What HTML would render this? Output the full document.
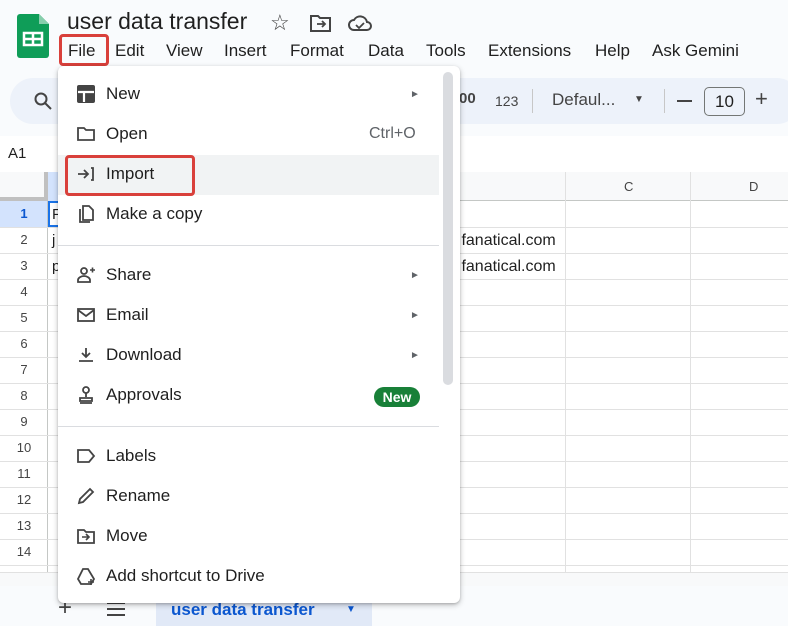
<!DOCTYPE html>
<html><head><style>
*{margin:0;padding:0;box-sizing:border-box}
body{width:788px;height:626px;overflow:hidden;background:#f9fbfd;font-family:"Liberation Sans",Arial,sans-serif;color:#1f1f1f;position:relative}
.a{position:absolute}
.mb{position:absolute;top:41px;font-size:17px;color:#1f1f1f}
.mi{position:absolute;left:106px;font-size:17px;color:#1f1f1f}
.ic{position:absolute;left:76px;width:20px;height:20px}
.rh{position:absolute;left:0;width:48px;text-align:center;font-size:13px;color:#444}
.hl{position:absolute;height:1px;background:#e1e1e1}
.arr{position:absolute;left:410px;font-size:10px;color:#5f6368}
</style></head><body>
<svg class="a" style="left:17px;top:14px" width="32" height="44" viewBox="0 0 32 44"><path d="M3 0h19l10 10v31a3 3 0 0 1-3 3H3a3 3 0 0 1-3-3V3a3 3 0 0 1 3-3z" fill="#0f9d58"/><path d="M22 0v10h10z" fill="#87ceac"/><rect x="7" y="19" width="18" height="12" fill="none" stroke="#fff" stroke-width="2.5"/><path d="M7 25h18M16 19v12" stroke="#fff" stroke-width="2.5"/></svg>
<div class="a" style="left:67px;top:8px;font-size:23px;color:#1f1f1f">user data transfer</div>
<div class="a" style="left:270px;top:10px;font-size:22px;color:#444">☆</div>
<svg class="a" style="left:310px;top:14px" width="22" height="18" viewBox="0 0 22 18"><path d="M1 2h7l2 2h10v13H1z" fill="none" stroke="#444" stroke-width="2"/><path d="M7 10h8M12 7l3 3-3 3" fill="none" stroke="#444" stroke-width="1.8"/></svg>
<svg class="a" style="left:348px;top:14px" width="24" height="18" viewBox="0 0 24 18"><path d="M6 16a5 5 0 0 1 0-10 7 7 0 0 1 13 2 4 4 0 0 1 0 8z" fill="none" stroke="#444" stroke-width="2"/><path d="M8 11l3 3 5-5" fill="none" stroke="#444" stroke-width="1.8"/></svg>
<div class="mb" style="left:68px">File</div>
<div class="mb" style="left:115px">Edit</div>
<div class="mb" style="left:166px">View</div>
<div class="mb" style="left:224px">Insert</div>
<div class="mb" style="left:290px">Format</div>
<div class="mb" style="left:368px">Data</div>
<div class="mb" style="left:426px">Tools</div>
<div class="mb" style="left:488px">Extensions</div>
<div class="mb" style="left:595px">Help</div>
<div class="mb" style="left:652px">Ask Gemini</div>
<div class="a" style="left:59px;top:34px;width:50px;height:32px;border:3px solid #d9403b;border-radius:4px"></div>
<div class="a" style="left:10px;top:78px;width:790px;height:46px;background:#edf2fa;border-radius:23px"></div>
<svg class="a" style="left:34px;top:92px" width="18" height="18" viewBox="0 0 18 18"><circle cx="7" cy="7" r="5.5" fill="none" stroke="#444" stroke-width="2"/><path d="M11 11l6 6" stroke="#444" stroke-width="2"/></svg>
<div class="a" style="left:459px;top:90px;font-size:15px;color:#444;font-weight:bold">00</div>
<div class="a" style="left:495px;top:93px;font-size:14px;color:#444">123</div>
<div class="a" style="left:532px;top:89px;width:1px;height:24px;background:#c7c7c7"></div>
<div class="a" style="left:552px;top:90px;font-size:17px;color:#444">Defaul...</div>
<div class="a" style="left:634px;top:94px;font-size:10px;color:#444">▼</div>
<div class="a" style="left:664px;top:89px;width:1px;height:24px;background:#c7c7c7"></div>
<div class="a" style="left:677px;top:100px;width:15px;height:2px;background:#444"></div>
<div class="a" style="left:704px;top:87px;width:41px;height:29px;border:1px solid #747775;border-radius:5px;font-size:17px;text-align:center;line-height:27px;color:#1f1f1f">10</div>
<div class="a" style="left:755px;top:86px;font-size:22px;color:#444">+</div>
<div class="a" style="left:0;top:136px;width:788px;height:36px;background:#fff"></div>
<div class="a" style="left:8px;top:145px;font-size:15px">A1</div>
<div class="a" style="left:0;top:172px;width:788px;height:414px;background:#fff"></div>
<div class="a" style="left:0;top:172px;width:48px;height:29px;background:#f8f9fa;border-right:4px solid #c0c0c0;border-bottom:4px solid #c0c0c0"></div>
<div class="a" style="left:48px;top:172px;width:740px;height:29px;background:#f8f9fa;border-bottom:1px solid #c4c7c5"></div>
<div class="a" style="left:48px;top:172px;width:12px;height:29px;background:#d3e3fd"></div>
<div class="a" style="left:0;top:201px;width:48px;height:26px;background:#d3e3fd"></div>
<div class="a" style="left:0;top:201px;width:48px;height:385px;border-right:1px solid #c4c7c5"></div>
<div class="a" style="left:565px;top:172px;width:1px;height:414px;background:#e1e1e1"></div>
<div class="a" style="left:690px;top:172px;width:1px;height:414px;background:#e1e1e1"></div>
<div class="a" style="left:624px;top:179px;font-size:13px;color:#444">C</div>
<div class="a" style="left:749px;top:179px;font-size:13px;color:#444">D</div>
<div class="hl" style="left:0;top:227px;width:788px"></div>
<div class="hl" style="left:0;top:253px;width:788px"></div>
<div class="hl" style="left:0;top:279px;width:788px"></div>
<div class="hl" style="left:0;top:305px;width:788px"></div>
<div class="hl" style="left:0;top:331px;width:788px"></div>
<div class="hl" style="left:0;top:357px;width:788px"></div>
<div class="hl" style="left:0;top:383px;width:788px"></div>
<div class="hl" style="left:0;top:409px;width:788px"></div>
<div class="hl" style="left:0;top:435px;width:788px"></div>
<div class="hl" style="left:0;top:461px;width:788px"></div>
<div class="hl" style="left:0;top:487px;width:788px"></div>
<div class="hl" style="left:0;top:513px;width:788px"></div>
<div class="hl" style="left:0;top:539px;width:788px"></div>
<div class="hl" style="left:0;top:565px;width:788px"></div>
<div class="rh" style="top:206px;font-weight:bold;color:#0b57d0">1</div>
<div class="rh" style="top:232px">2</div><div class="rh" style="top:258px">3</div><div class="rh" style="top:284px">4</div><div class="rh" style="top:310px">5</div><div class="rh" style="top:336px">6</div><div class="rh" style="top:362px">7</div><div class="rh" style="top:388px">8</div><div class="rh" style="top:414px">9</div><div class="rh" style="top:440px">10</div><div class="rh" style="top:466px">11</div><div class="rh" style="top:492px">12</div><div class="rh" style="top:518px">13</div><div class="rh" style="top:544px">14</div>
<div class="a" style="left:48px;top:201px;width:12px;height:26px;border:2px solid #1a73e8;border-right:none"></div>
<div class="a" style="left:52px;top:206px;font-size:15px">F</div>
<div class="a" style="left:52px;top:232px;font-size:15px">j</div>
<div class="a" style="left:52px;top:258px;font-size:15px">p</div>
<div class="a" style="left:457px;top:232px;font-size:16px">:fanatical.com</div>
<div class="a" style="left:457px;top:258px;font-size:16px">:fanatical.com</div>
<div class="a" style="left:0;top:572px;width:788px;height:14px;background:#f8f9fa;border-top:1px solid #e1e1e1"></div>
<div class="a" style="left:0;top:586px;width:788px;height:40px;background:#f9fbfd"></div>
<div class="a" style="left:58px;top:594px;font-size:24px;color:#444">+</div>
<div class="a" style="left:107px;top:602px;width:18px;height:2px;background:#444;box-shadow:0 6px 0 #444,0 12px 0 #444"></div>
<div class="a" style="left:156px;top:592px;width:216px;height:34px;background:#e1e9f7"></div>
<div class="a" style="left:171px;top:600px;font-size:17px;font-weight:bold;color:#0b57d0">user data transfer</div>
<div class="a" style="left:346px;top:604px;font-size:10px;color:#0b57d0">▼</div>
<div class="a" style="left:58px;top:66px;width:402px;height:537px;background:#fff;border-radius:6px;box-shadow:0 2px 6px rgba(0,0,0,.25),0 1px 2px rgba(0,0,0,.15)"></div>
<div class="a" style="left:443px;top:72px;width:10px;height:313px;background:#dadce0;border-radius:5px"></div>
<div class="a" style="left:58px;top:155px;width:381px;height:40px;background:#f1f3f4"></div>
<div class="a" style="left:58px;top:245px;width:381px;height:1px;background:#dadce0"></div>
<div class="a" style="left:58px;top:426px;width:381px;height:1px;background:#dadce0"></div>
<div class="a" style="left:65px;top:155px;width:130px;height:41px;border:3px solid #d9403b;border-radius:4px"></div>
<svg class="ic" style="top:84px" viewBox="0 0 20 20"><rect x="1" y="1" width="18" height="18" rx="2" fill="#444"/><path d="M2 8h16M8 8v10" stroke="#fff" stroke-width="2.2"/></svg>
<div class="mi" style="top:84px">New</div><div class="arr" style="top:89px">►</div>
<svg class="ic" style="top:124px" viewBox="0 0 20 20"><path d="M2 4h6l2 2h8v10H2z" fill="none" stroke="#444" stroke-width="1.8"/></svg>
<div class="mi" style="top:124px">Open</div><div class="a" style="left:369px;top:125px;font-size:16px;color:#5f6368">Ctrl+O</div>
<svg class="ic" style="top:164px" viewBox="0 0 20 20"><path d="M2 10h9M8 6l4 4-4 4M15 4h2v12h-2" fill="none" stroke="#444" stroke-width="1.8"/></svg>
<div class="mi" style="top:164px">Import</div>
<svg class="ic" style="top:204px" viewBox="0 0 20 20"><path d="M7 2h6l4 4v10H7z M4 5v13h10" fill="none" stroke="#444" stroke-width="1.8"/></svg>
<div class="mi" style="top:204px">Make a copy</div>
<svg class="ic" style="top:265px" viewBox="0 0 20 20"><circle cx="8" cy="6" r="3" fill="none" stroke="#444" stroke-width="1.8"/><path d="M2 17v-2c0-2 3-4 6-4s6 2 6 4v2z" fill="none" stroke="#444" stroke-width="1.8"/><path d="M14 5h5M16.5 2.5v5" stroke="#444" stroke-width="1.6"/></svg>
<div class="mi" style="top:265px">Share</div><div class="arr" style="top:270px">►</div>
<svg class="ic" style="top:305px" viewBox="0 0 20 20"><rect x="2" y="4" width="16" height="12" fill="none" stroke="#444" stroke-width="1.8"/><path d="M2 5l8 6 8-6" fill="none" stroke="#444" stroke-width="1.8"/></svg>
<div class="mi" style="top:305px">Email</div><div class="arr" style="top:310px">►</div>
<svg class="ic" style="top:345px" viewBox="0 0 20 20"><path d="M10 3v9M6 8l4 4 4-4M3 16h14" fill="none" stroke="#444" stroke-width="1.8"/></svg>
<div class="mi" style="top:345px">Download</div><div class="arr" style="top:350px">►</div>
<svg class="ic" style="top:385px" viewBox="0 0 20 20"><circle cx="10" cy="5" r="3" fill="none" stroke="#444" stroke-width="1.8"/><path d="M10 8v4M4 13h12v3H4zM4 18h12" fill="none" stroke="#444" stroke-width="1.8"/></svg>
<div class="mi" style="top:385px">Approvals</div>
<div class="a" style="left:374px;top:387px;width:46px;height:20px;background:#188038;border-radius:10px;color:#fff;font-weight:bold;font-size:14px;text-align:center;line-height:20px">New</div>
<svg class="ic" style="top:446px" viewBox="0 0 20 20"><path d="M2 4h11l5 6-5 6H2z" fill="none" stroke="#444" stroke-width="1.8"/></svg>
<div class="mi" style="top:446px">Labels</div>
<svg class="ic" style="top:486px" viewBox="0 0 20 20"><path d="M3 17l1-4L14 3l3 3L7 16z" fill="none" stroke="#444" stroke-width="1.8"/></svg>
<div class="mi" style="top:486px">Rename</div>
<svg class="ic" style="top:526px" viewBox="0 0 20 20"><path d="M2 4h6l2 2h8v11H2z" fill="none" stroke="#444" stroke-width="1.8"/><path d="M6 11h7M10 8l3 3-3 3" fill="none" stroke="#444" stroke-width="1.6"/></svg>
<div class="mi" style="top:526px">Move</div>
<svg class="ic" style="top:566px" viewBox="0 0 20 20"><path d="M7 3h5l6 10-3 5H5l-3-5z" fill="none" stroke="#444" stroke-width="1.8"/><path d="M15 13v6M12 16h6" stroke="#444" stroke-width="1.6"/></svg>
<div class="mi" style="top:566px">Add shortcut to Drive</div>
</body></html>
